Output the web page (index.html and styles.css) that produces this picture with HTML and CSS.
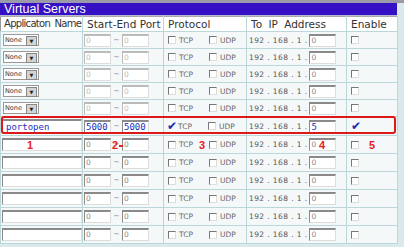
FILE: index.html
```html
<!DOCTYPE html>
<html lang="en">
<head>
<meta charset="UTF-8">
<title>Virtual Servers</title>
<link rel="stylesheet" href="styles.css">
</head>
<body>
<div class="topline"></div>
<div class="panel">
  <div class="title">Virtual Servers</div>
  <table class="vs">
    <colgroup>
      <col class="c-app"><col class="c-port"><col class="c-proto"><col class="c-ip"><col class="c-en">
    </colgroup>
    <tr class="head">
      <th class="h-app">Applicaton Name</th><th>Start-End Port</th><th>Protocol</th><th class="h-ip">To IP Address</th><th>Enable</th>
    </tr>
    <tr>
      <td><span class="sel">None<i class="drop">&#9660;</i></span></td>
      <td><span class="box p1 dim">0</span><span class="tilde">~</span><span class="box p2 dim">0</span></td>
      <td><span class="cb"></span><span class="lbl">TCP</span><span class="cb"></span><span class="lbl">UDP</span></td>
      <td><span class="ip">192 . 168 . 1 .</span><span class="box ipbox">0</span></td>
      <td><span class="cb en"></span></td>
    </tr>
    <tr>
      <td><span class="sel">None<i class="drop">&#9660;</i></span></td>
      <td><span class="box p1 dim">0</span><span class="tilde">~</span><span class="box p2 dim">0</span></td>
      <td><span class="cb"></span><span class="lbl">TCP</span><span class="cb"></span><span class="lbl">UDP</span></td>
      <td><span class="ip">192 . 168 . 1 .</span><span class="box ipbox">0</span></td>
      <td><span class="cb en"></span></td>
    </tr>
    <tr>
      <td><span class="sel">None<i class="drop">&#9660;</i></span></td>
      <td><span class="box p1 dim">0</span><span class="tilde">~</span><span class="box p2 dim">0</span></td>
      <td><span class="cb"></span><span class="lbl">TCP</span><span class="cb"></span><span class="lbl">UDP</span></td>
      <td><span class="ip">192 . 168 . 1 .</span><span class="box ipbox">0</span></td>
      <td><span class="cb en"></span></td>
    </tr>
    <tr>
      <td><span class="sel">None<i class="drop">&#9660;</i></span></td>
      <td><span class="box p1 dim">0</span><span class="tilde">~</span><span class="box p2 dim">0</span></td>
      <td><span class="cb"></span><span class="lbl">TCP</span><span class="cb"></span><span class="lbl">UDP</span></td>
      <td><span class="ip">192 . 168 . 1 .</span><span class="box ipbox">0</span></td>
      <td><span class="cb en"></span></td>
    </tr>
    <tr>
      <td><span class="sel">None<i class="drop">&#9660;</i></span></td>
      <td><span class="box p1 dim">0</span><span class="tilde">~</span><span class="box p2 dim">0</span></td>
      <td><span class="cb"></span><span class="lbl">TCP</span><span class="cb"></span><span class="lbl">UDP</span></td>
      <td><span class="ip">192 . 168 . 1 .</span><span class="box ipbox">0</span></td>
      <td><span class="cb en"></span></td>
    </tr>
    <tr class="hl">
      <td><span class="box app blue">portopen</span></td>
      <td><span class="box p1 blue">5000</span><span class="tilde">~</span><span class="box p2 blue">5000</span></td>
      <td><span class="tick">&#10004;</span><span class="lbl">TCP</span><span class="cb"></span><span class="lbl">UDP</span></td>
      <td><span class="ip">192 . 168 . 1 .</span><span class="box ipbox blue">5</span></td>
      <td><span class="tick en">&#10004;</span></td>
    </tr>
    <tr class="lo marks">
      <td><span class="box app"></span><b class="num n1">1</b></td>
      <td><span class="box p1">0</span><span class="tilde">~</span><span class="box p2">0</span><b class="num n2">2</b></td>
      <td><span class="cb"></span><span class="lbl">TCP</span><span class="cb"></span><span class="lbl">UDP</span><b class="num n3">3</b></td>
      <td><span class="ip">192 . 168 . 1 .</span><span class="box ipbox">0</span><b class="num n4">4</b></td>
      <td><span class="cb en"></span><b class="num n5">5</b></td>
    </tr>
    <tr class="lo">
      <td><span class="box app"></span></td>
      <td><span class="box p1">0</span><span class="tilde">~</span><span class="box p2">0</span></td>
      <td><span class="cb"></span><span class="lbl">TCP</span><span class="cb"></span><span class="lbl">UDP</span></td>
      <td><span class="ip">192 . 168 . 1 .</span><span class="box ipbox">0</span></td>
      <td><span class="cb en"></span></td>
    </tr>
    <tr class="lo">
      <td><span class="box app"></span></td>
      <td><span class="box p1">0</span><span class="tilde">~</span><span class="box p2">0</span></td>
      <td><span class="cb"></span><span class="lbl">TCP</span><span class="cb"></span><span class="lbl">UDP</span></td>
      <td><span class="ip">192 . 168 . 1 .</span><span class="box ipbox">0</span></td>
      <td><span class="cb en"></span></td>
    </tr>
    <tr class="lo">
      <td><span class="box app"></span></td>
      <td><span class="box p1">0</span><span class="tilde">~</span><span class="box p2">0</span></td>
      <td><span class="cb"></span><span class="lbl">TCP</span><span class="cb"></span><span class="lbl">UDP</span></td>
      <td><span class="ip">192 . 168 . 1 .</span><span class="box ipbox">0</span></td>
      <td><span class="cb en"></span></td>
    </tr>
    <tr class="lo">
      <td><span class="box app"></span></td>
      <td><span class="box p1">0</span><span class="tilde">~</span><span class="box p2">0</span></td>
      <td><span class="cb"></span><span class="lbl">TCP</span><span class="cb"></span><span class="lbl">UDP</span></td>
      <td><span class="ip">192 . 168 . 1 .</span><span class="box ipbox">0</span></td>
      <td><span class="cb en"></span></td>
    </tr>
    <tr class="lo">
      <td><span class="box app"></span></td>
      <td><span class="box p1">0</span><span class="tilde">~</span><span class="box p2">0</span></td>
      <td><span class="cb"></span><span class="lbl">TCP</span><span class="cb"></span><span class="lbl">UDP</span></td>
      <td><span class="ip">192 . 168 . 1 .</span><span class="box ipbox">0</span></td>
      <td><span class="cb en"></span></td>
    </tr>
  </table>
  <div class="redbox"></div>
</div>
</body>
</html>
```
FILE: styles.css
```css
body {
  margin: 0;
  height: 247px;
  background-color: #d9e9ec;
  font-family: "DejaVu Sans", sans-serif;
  overflow: hidden;
}

.topline {
  height: 3px;
  background-color: #9a9aa8;
}

.panel {
  position: relative;
  width: 397px;
}

.title {
  height: 12px;
  line-height: 13px;
  padding-left: 4px;
  background-color: #3610c4;
  color: #fff;
  font-family: "Liberation Sans", sans-serif;
  font-size: 12.5px;
  border-bottom: 1px solid #b8b8d0;
}

.vs {
  border-collapse: collapse;
  table-layout: fixed;
  width: 397px;
  background-color: #f5f8f9;
}

.c-app { width: 82px; }
.c-port { width: 81px; }
.c-proto { width: 83px; }
.c-ip { width: 100px; }
.c-en { width: 51px; }

.vs th,
.vs td {
  border: 1px solid #bcd7da;
  padding: 0 0 0 1px;
  white-space: nowrap;
  overflow: visible;
  position: relative;
}

.vs th {
  height: 14px;
  line-height: 14px;
  font-weight: normal;
  font-size: 10.5px;
  color: #333;
  text-align: left;
  background-color: #fff;
  padding-left: 4px;
  border-left: 1px solid #999;
  border-top: 1px solid #aaa;
}

.vs th.h-app {
  font-size: 10px;
  letter-spacing: -0.7px;
  word-spacing: 2px;
  padding-left: 3px;
}

.vs th.h-ip {
  word-spacing: 3px;
}

.vs td {
  height: 16px;
  line-height: 9px;
  font-size: 8px;
  color: #555;
}

.vs tr.hl td {
  height: 18px;
}

.vs tr.lo td {
  height: 17px;
}

.sel {
  display: inline-block;
  width: 33px;
  height: 10px;
  line-height: 10px;
  font-size: 6.5px;
  color: #333;
  background-color: #fff;
  border: 1px solid #999;
  padding-left: 1px;
  margin-left: 1px;
  box-sizing: content-box;
  vertical-align: middle;
  position: relative;
}

.drop {
  position: absolute;
  right: 1px;
  top: 1px;
  width: 9px;
  height: 8px;
  background-color: #d4d4d4;
  border: 1px solid #888;
  font-style: normal;
  font-size: 5px;
  line-height: 8px;
  text-align: center;
  color: #222;
}

.box {
  display: inline-block;
  height: 10px;
  line-height: 10px;
  background-color: #fff;
  border-top: 2px solid #8a8a8a;
  border-left: 1px solid #8a8a8a;
  border-right: 1px solid #ddd;
  border-bottom: 1px solid #ddd;
  font-size: 7.5px;
  color: #888;
  padding-left: 1px;
  vertical-align: middle;
  box-sizing: content-box;
}

.box.dim {
  color: #bbb;
  border-top-color: #bbb;
  border-left-color: #bbb;
}

.box.app { width: 77px; }
.p1 { width: 24px; }
.p2 { width: 24px; }
.ipbox { width: 24px; margin-left: 2px; }

.box.blue {
  color: #2030c0;
  font-size: 9px;
  font-family: "DejaVu Sans Mono", monospace;
}

.box.app.blue {
  height: 12px;
  line-height: 12px;
  padding-left: 3px;
  width: 75px;
}

.tilde {
  display: inline-block;
  width: 11px;
  text-align: center;
  font-size: 7px;
  color: #666;
  vertical-align: middle;
}

.cb {
  display: inline-block;
  width: 6px;
  height: 6px;
  border-top: 1px solid #777;
  border-left: 1px solid #777;
  border-right: 1px solid #ddd;
  border-bottom: 1px solid #ddd;
  background-color: #fff;
  vertical-align: middle;
  margin-left: 3px;
}

.cb.en,
.tick.en {
  margin-left: 3px;
}

.tick {
  display: inline-block;
  width: 8px;
  margin-left: 2px;
  color: #1a2ab0;
  font-size: 12px;
  line-height: 10px;
  font-weight: bold;
  vertical-align: middle;
}

.lbl {
  display: inline-block;
  width: 27px;
  padding-left: 3px;
  font-size: 7.5px;
  color: #666;
  vertical-align: middle;
}

.ip {
  font-size: 7.5px;
  color: #555;
  vertical-align: middle;
  letter-spacing: 0.4px;
  padding-left: 1px;
}

.num {
  position: absolute;
  top: 3px;
  color: #e82020;
  font-size: 11px;
  line-height: 12px;
  font-family: "Liberation Sans", sans-serif;
}

.n1 { left: 26px; }
.n2 { left: 29px; }
.n2::after {
  content: "";
  display: inline-block;
  width: 4px;
  height: 2px;
  margin-left: 1px;
  vertical-align: middle;
  background-color: #e82020;
}
.n3 { left: 35px; }
.n4 { left: 72px; }
.n5 { left: 22px; }

.redbox {
  position: absolute;
  left: 1px;
  top: 113px;
  width: 391px;
  height: 14px;
  border: 2px solid #dc1818;
  border-radius: 3px;
}
```
